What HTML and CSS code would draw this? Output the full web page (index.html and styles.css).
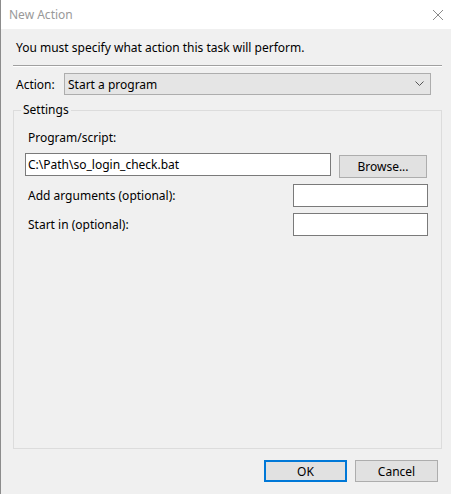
FILE: index.html
```html
<!DOCTYPE html>
<html>
<head>
<meta charset="utf-8">
<link rel="stylesheet" href="styles.css">
</head>
<body>
<div class="window">
  <div class="titlebar">
    <span class="title">New Action</span>
    <svg class="close" width="12" height="12" viewBox="0 0 12 12"><path d="M1 1 L11 11 M11 1 L1 11" stroke="#8a8a8a" stroke-width="1" fill="none"/></svg>
  </div>
  <div class="body">
    <div class="intro">You must specify what action this task will perform.</div>
    <div class="separator"></div>
    <div class="action-row">
      <span class="action-label">Action:</span>
      <div class="combo">
        <span>Start a program</span>
        <svg class="chevron" width="9" height="6" viewBox="0 0 9 6"><path d="M0.5 0.5 L4.5 4.5 L8.5 0.5" stroke="#555" stroke-width="1" fill="none"/></svg>
      </div>
    </div>
    <fieldset class="group">
      <legend>Settings</legend>
      <div class="field-label">Program/script:</div>
      <div class="program-row">
        <div class="textbox program">C:\Path\so_login_check.bat</div>
        <div class="button browse">Browse...</div>
      </div>
      <div class="opt-row">
        <span class="opt-label">Add arguments (optional):</span>
        <div class="textbox small"></div>
      </div>
      <div class="opt-row">
        <span class="opt-label">Start in (optional):</span>
        <div class="textbox small"></div>
      </div>
    </fieldset>
    <div class="footer">
      <div class="button ok">OK</div>
      <div class="button cancel">Cancel</div>
    </div>
  </div>
</div>
</body>
</html>
```

FILE: styles.css
```css
html, body {
  margin: 0;
  padding: 0;
  background: #f0f0f0;
}
body {
  font-family: "Noto Sans", "Open Sans", sans-serif;
  font-size: 12px;
  color: #000;
}
.window {
  width: 451px;
  height: 494px;
  box-sizing: border-box;
  border-left: 1px solid #8c8c8c;
  background: #f0f0f0;
  display: flex;
  flex-direction: column;
}
.titlebar {
  height: 29px;
  background: #fff;
  display: flex;
  align-items: center;
  justify-content: space-between;
  padding: 0 7px 0 8px;
  flex-shrink: 0;
}
.title {
  color: #999;
  font-size: 12px;
}
.close {
  display: block;
}
.body {
  flex: 1;
  display: flex;
  flex-direction: column;
  padding: 11px 9px 0 12px;
}
.intro {
  line-height: 16px;
  padding-left: 3px;
}
.separator {
  margin-top: 9px;
  height: 1px;
  background: #a0a0a0;
  border-bottom: 1px solid #fff;
}
.action-row {
  display: flex;
  align-items: center;
  margin-top: 6px;
  padding-left: 3px;
}
.action-label {
  width: 48px;
}
.combo {
  width: 367px;
  height: 22px;
  box-sizing: border-box;
  background: #e5e5e5;
  border: 1px solid #adadad;
  display: flex;
  align-items: center;
  justify-content: space-between;
  padding: 0 6px 0 3px;
}
.chevron {
  display: block;
}
.group {
  margin: 7px 0 0 0;
  width: 429px;
  height: 347px;
  box-sizing: border-box;
  border: 1px solid #dcdcdc;
  padding: 12px 12px 0 11px;
  min-width: 0;
}
.group legend {
  padding: 0 2px;
  margin-left: -4px;
  line-height: 16px;
}
.field-label {
  line-height: 16px;
  padding-left: 3px;
}
.program-row {
  display: flex;
  align-items: flex-start;
  margin-top: 7px;
}
.textbox {
  height: 23px;
  box-sizing: border-box;
  background: #fff;
  border: 1px solid #7a7a7a;
  display: flex;
  align-items: center;
  padding-left: 2px;
}
.textbox.program {
  width: 306px;
}
.textbox.small {
  width: 135px;
}
.button {
  box-sizing: border-box;
  background: #e1e1e1;
  border: 1px solid #adadad;
  display: flex;
  align-items: center;
  justify-content: center;
}
.browse {
  width: 88px;
  height: 23px;
  margin-left: 8px;
  margin-top: 2px;
}
.opt-row {
  display: flex;
  align-items: center;
  justify-content: space-between;
  margin-top: 6px;
  width: 403px;
  padding-left: 3px;
  box-sizing: border-box;
}
.opt-row + .opt-row {
  margin-top: 6px;
}
.footer {
  display: flex;
  justify-content: flex-end;
  gap: 8px;
  margin-top: 11px;
  padding-right: 4px;
}
.ok, .cancel {
  width: 83px;
  height: 22px;
}
.ok {
  border: 2px solid #0078d7;
}
```
